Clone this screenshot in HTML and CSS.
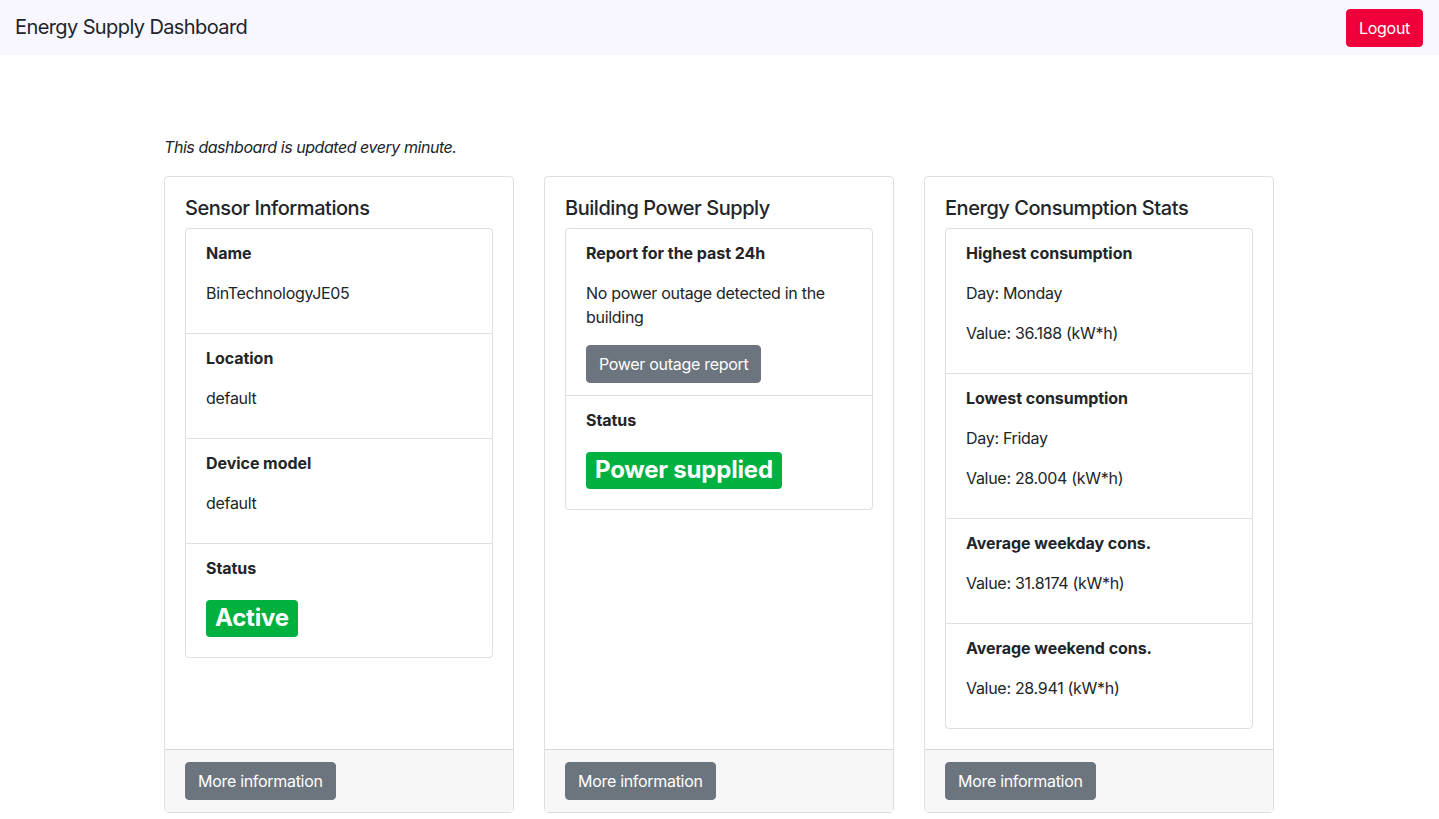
FILE: index.html
```html
<!DOCTYPE html>
<html lang="en">
<head>
<meta charset="utf-8">
<title>Energy Supply Dashboard</title>
<link rel="stylesheet" href="styles.css">
</head>
<body>
<nav class="navbar">
  <span class="brand">Energy Supply Dashboard</span>
  <button class="btn btn-logout">Logout</button>
</nav>
<main class="container">
  <p class="note">This dashboard is updated every minute.</p>
  <div class="deck">
    <section class="card">
      <div class="card-body">
        <h5 class="card-title">Sensor Informations</h5>
        <ul class="list">
          <li class="item"><p><b>Name</b></p><p>BinTechnologyJE05</p></li>
          <li class="item"><p><b>Location</b></p><p>default</p></li>
          <li class="item"><p><b>Device model</b></p><p>default</p></li>
          <li class="item"><p><b>Status</b></p><h2 class="status"><span class="badge">Active</span></h2></li>
        </ul>
      </div>
      <div class="card-footer"><button class="btn btn-secondary">More information</button></div>
    </section>
    <section class="card">
      <div class="card-body">
        <h5 class="card-title">Building Power Supply</h5>
        <ul class="list">
          <li class="item"><p><b>Report for the past 24h</b></p><p>No power outage detected in the building</p><button class="btn btn-secondary">Power outage report</button></li>
          <li class="item"><p><b>Status</b></p><h2 class="status"><span class="badge">Power supplied</span></h2></li>
        </ul>
      </div>
      <div class="card-footer"><button class="btn btn-secondary">More information</button></div>
    </section>
    <section class="card">
      <div class="card-body">
        <h5 class="card-title">Energy Consumption Stats</h5>
        <ul class="list">
          <li class="item"><p><b>Highest consumption</b></p><p>Day: Monday</p><p>Value: 36.188 (kW*h)</p></li>
          <li class="item"><p><b>Lowest consumption</b></p><p>Day: Friday</p><p>Value: 28.004 (kW*h)</p></li>
          <li class="item"><p><b>Average weekday cons.</b></p><p>Value: 31.8174 (kW*h)</p></li>
          <li class="item"><p><b>Average weekend cons.</b></p><p>Value: 28.941 (kW*h)</p></li>
        </ul>
      </div>
      <div class="card-footer"><button class="btn btn-secondary">More information</button></div>
    </section>
  </div>
</main>
</body>
</html>
```
FILE: styles.css
```css
* { box-sizing: border-box; }
html, body { margin: 0; }
body {
  font-family: Inter, "Noto Sans", "Liberation Sans", sans-serif;
  font-size: 16px;
  line-height: 1.5;
  letter-spacing: -0.3px;
  color: #212529;
  background: #fff;
}
.navbar {
  height: 55px;
  background: #f8f7ff;
  display: flex;
  align-items: center;
  justify-content: space-between;
  padding: 0 16px 0 15px;
}
.brand {
  font-size: 20px;
  line-height: 30px;
  letter-spacing: -0.6px;
  color: #212529;
  margin-top: -1px;
}
.btn {
  font-family: inherit;
  font-size: 16px;
  line-height: 24px;
  letter-spacing: -0.3px;
  padding: 6px 12px;
  border: 1px solid transparent;
  border-radius: 4px;
  color: #fff;
  cursor: pointer;
}
.btn-logout {
  background: #ef003b;
  border-color: #ef003b;
  margin-top: 1px;
}
.btn-secondary {
  background: #6c757d;
  border-color: #6c757d;
}
.container {
  width: 1141px;
  margin: 0 auto;
  padding: 80px 15px 0;
}
.note {
  font-style: italic;
  letter-spacing: -0.45px;
  margin: 0 0 17px;
}
.deck {
  display: flex;
  gap: 30px;
  align-items: stretch;
}
.card {
  flex: 0 0 350px;
  display: flex;
  flex-direction: column;
  border: 1px solid rgba(0,0,0,.125);
  border-radius: 4px;
  height: 637px;
}
.card-body {
  flex: 1 1 auto;
  padding: 19px 20px 20px;
}
.card-title {
  font-size: 20px;
  font-weight: 500;
  line-height: 1.2;
  letter-spacing: -0.45px;
  margin: 0 0 8px;
}
.list {
  list-style: none;
  margin: 0;
  padding: 0;
  border: 1px solid rgba(0,0,0,.125);
  border-radius: 4px;
}
.item {
  padding: 12px 20px 12px;
  border-bottom: 1px solid rgba(0,0,0,.125);
}
.item:last-child { border-bottom: 0; }
.item p { margin: 0 0 16px; }
.item b { font-weight: 700; letter-spacing: -0.05px; }
.status {
  font-size: 32px;
  line-height: 1.2;
  margin: 0 0 8px;
  font-weight: 500;
}
.badge {
  display: inline-block;
  background: #00b140;
  color: #fff;
  font-size: 24px;
  font-weight: 700;
  line-height: 1;
  letter-spacing: -0.2px;
  padding: 6px 9px 7px;
  border-radius: 4px;
  vertical-align: baseline;
}
.card-footer {
  background: #f7f7f7;
  border-top: 1px solid rgba(0,0,0,.125);
  padding: 12px 20px;
}
```
